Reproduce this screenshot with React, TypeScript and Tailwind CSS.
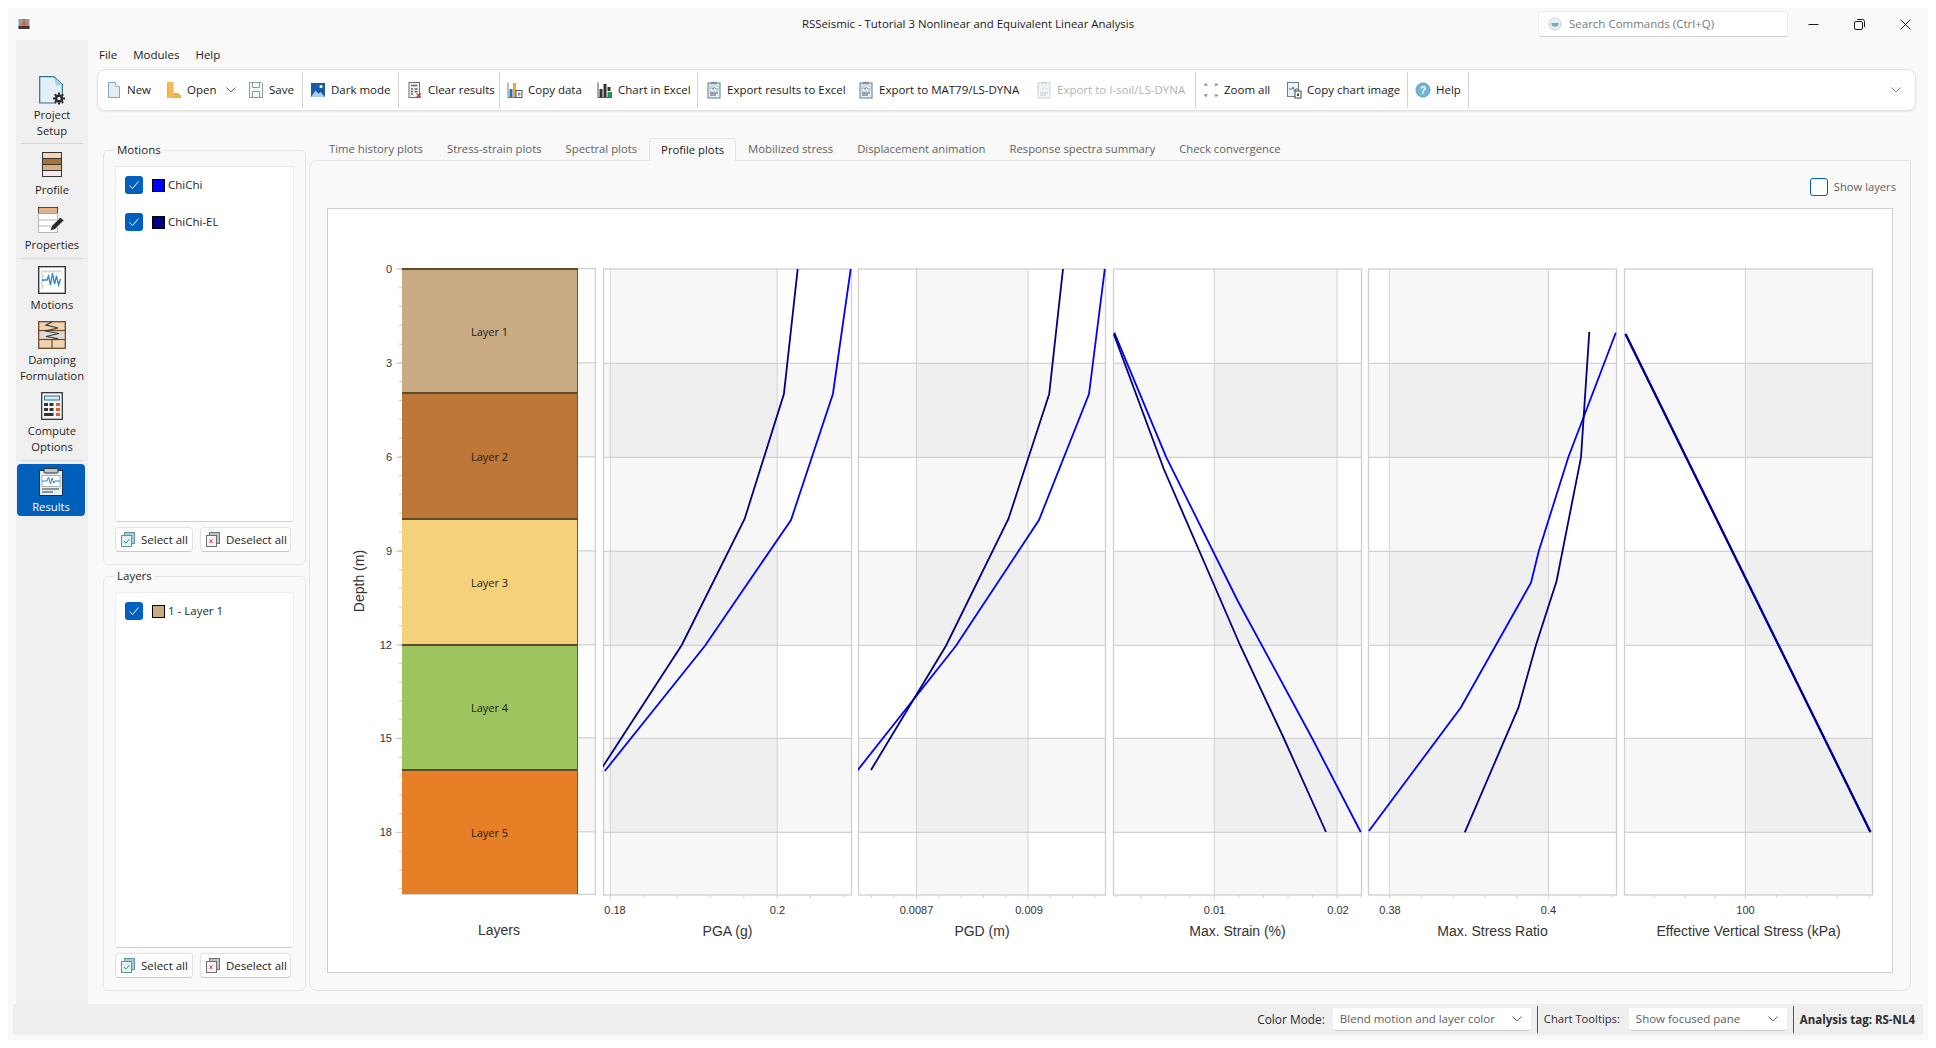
import { ReactNode } from 'react'

const uiFont = "font-['Open_Sans','Noto_Sans',sans-serif]"
const chartFont = "font-['Liberation_Sans',Arial,sans-serif]"

const TOP = 268
const BOTTOM = 894
const rowLines = [362.3, 456.3, 550.3, 644.3, 737.3, 831.3]
const rowEdges = [TOP, ...rowLines, BOTTOM]

function NewIcon() {
  return (
    <svg width="16" height="18" viewBox="0 0 16 18">
      <path d="M2.5 1.5h7l4 4v11h-11z" fill="#e3eff5" stroke="#7fa6b8" />
      <path d="M9.5 1.5v4h4" fill="#f6fbfd" stroke="#9fbecb" />
    </svg>
  )
}

function OpenIcon() {
  return (
    <svg width="16" height="18" viewBox="0 0 16 18">
      <path d="M1 1h6.5v11h4.5l3 2.5V17H1z" fill="#f6ad3c" />
      <path d="M3 1h1.5v16H3zM6 1h1.5v16H6z" fill="#f9c46f" />
    </svg>
  )
}

function SaveIcon() {
  return (
    <svg width="16" height="18" viewBox="0 0 16 18">
      <path d="M1.5 1.5h12l1 1v14h-13z" fill="#f5f8fa" stroke="#8d9ca3" />
      <path d="M4.5 1.5v5h7v-5M4.5 16.5v-6h7v6" fill="none" stroke="#8d9ca3" />
    </svg>
  )
}

function DarkIcon() {
  return (
    <svg width="16" height="18" viewBox="0 0 16 18">
      <rect x="1" y="2" width="14" height="14" fill="#175ca8" />
      <circle cx="11" cy="5.5" r="1.6" fill="#fff" />
      <path d="M1 16l4.5-6.5 3 3.2 2-1.7L15 16z" fill="#a9cdf0" />
    </svg>
  )
}

function ClearIcon() {
  return (
    <svg width="16" height="18" viewBox="0 0 16 18">
      <rect x="2" y="1.5" width="10.5" height="15" fill="#f4f4f4" stroke="#6d6d6d" />
      <path d="M4 4.5h6.5M4 8h2M7.5 8h3M4 10.5h2M7.5 10.5h3M4 13h2" stroke="#666" strokeWidth="1.3" />
      <path d="M9.5 12.5l4.5 4M14 12.5l-4.5 4" stroke="#c8332b" strokeWidth="1.1" />
    </svg>
  )
}

function CopyDataIcon() {
  return (
    <svg width="16" height="18" viewBox="0 0 16 18">
      <path d="M1 1.5v15h8" fill="none" stroke="#777" />
      <rect x="2.5" y="8" width="3" height="8" fill="#1f76c2" />
      <rect x="6" y="2" width="3" height="14" fill="#f2a73b" />
      <rect x="9" y="9.5" width="6" height="7" fill="#fff" stroke="#555" />
      <rect x="11" y="11.5" width="2.5" height="3" fill="#8d8d8d" />
    </svg>
  )
}

function ChartExcelIcon() {
  return (
    <svg width="16" height="18" viewBox="0 0 16 18">
      <path d="M1 1.5v15h14" fill="none" stroke="#555" />
      <rect x="2.5" y="8" width="3" height="8" fill="#333" />
      <rect x="6.5" y="3" width="3" height="13" fill="#333" />
      <rect x="10.5" y="6" width="3" height="4" fill="#333" />
      <rect x="10.5" y="11" width="4.5" height="5.5" fill="#1d9a4d" />
    </svg>
  )
}

function ExportIcon({ faded }: { faded?: boolean }) {
  return (
    <svg width="16" height="18" viewBox="0 0 16 18" opacity={faded ? 0.35 : 1}>
      <rect x="2" y="2" width="12" height="15" fill="#e3eff5" stroke="#5f7d8c" />
      <rect x="5" y="0.8" width="6" height="2.4" fill="#8d8d8d" />
      <rect x="4" y="5" width="8" height="5" fill="#fff" stroke="#9aa" strokeWidth="0.6" />
      <path d="M4.5 8l1.5-1.5 1 2 1.5-2.5 1 2H12" fill="none" stroke="#2b83c6" strokeWidth="0.8" />
      <path d="M4 12h8M4 14h6" stroke="#555" />
    </svg>
  )
}

function ZoomAllIcon() {
  return (
    <svg width="16" height="18" viewBox="0 0 16 18" fill="none" stroke="#777">
      <path d="M2 5V3h2M2.5 3l2 2M14 5V3h-2M13.5 3l-2 2M2 13v2h2M2.5 15l2-2M14 13v2h-2M13.5 15l-2-2" />
    </svg>
  )
}

function CopyChartIcon() {
  return (
    <svg width="16" height="18" viewBox="0 0 16 18">
      <rect x="1.5" y="1.5" width="11" height="14" fill="#eef3f6" stroke="#7a7a7a" />
      <path d="M3 8h3l1-2 1.5 4 1-2H12" fill="none" stroke="#2b83c6" />
      <rect x="9" y="10" width="6" height="7" fill="#fff" stroke="#444" />
      <rect x="11" y="12.5" width="2" height="2.5" fill="#444" />
    </svg>
  )
}

function HelpIcon() {
  return (
    <svg width="16" height="18" viewBox="0 0 16 18">
      <circle cx="8" cy="9" r="7" fill="#72b6d9" stroke="#5a9ec2" />
      <text x="8" y="12.5" textAnchor="middle" fontSize="10" fontFamily="Liberation Sans" fontWeight="700" fill="#fff">?</text>
    </svg>
  )
}

function ChevronDown({ stroke = '#666' }: { stroke?: string }) {
  return (
    <svg width="10" height="6" viewBox="0 0 10 6" fill="none" stroke={stroke}>
      <path d="M0.5 0.5L5 5l4.5-4.5" />
    </svg>
  )
}

function ProjectIcon() {
  return (
    <svg width="26" height="29" viewBox="0 0 26 29">
      <path d="M0.7 0.7h14l8.6 7.8v18.5H0.7z" fill="#e2eff6" stroke="#2a7290" strokeWidth="1.2" />
      <path d="M14.5 0.7l8.6 7.8-6 1.5z" fill="#a8d4e8" />
      <circle cx="20" cy="22.5" r="5.8" fill="#f0f0f0" />
      <circle cx="20" cy="22.5" r="3" fill="none" stroke="#2a2a2a" strokeWidth="2.6" />
      <path d="M20 16.5v2M20 26.5v2M14 22.5h2M24 22.5h2M15.8 18.3l1.4 1.4M22.8 25.3l1.4 1.4M15.8 26.7l1.4-1.4M22.8 19.7l1.4-1.4" stroke="#2a2a2a" strokeWidth="2" />
    </svg>
  )
}

function ProfileIcon() {
  return (
    <svg width="20" height="25" viewBox="0 0 20 25">
      <rect x="0.5" y="0.5" width="19" height="6" fill="#f3d6b4" stroke="#333" />
      <rect x="0.5" y="6.5" width="19" height="6" fill="#a6723f" stroke="#333" />
      <rect x="0.5" y="12.5" width="19" height="6" fill="#ddad7c" stroke="#333" />
      <rect x="0.5" y="18.5" width="19" height="6" fill="#ececec" stroke="#333" />
    </svg>
  )
}

function PropertiesIcon() {
  return (
    <svg width="28" height="28" viewBox="0 0 28 28">
      <rect x="0.5" y="0.5" width="19" height="6" fill="#dfb48b" stroke="#5a4632" />
      <path d="M0.5 6.5v19h19v-19M0.5 13h19M0.5 19h19" fill="#fff" stroke="#b5b5b5" />
      <path d="M12 24l1.5-5 9-9 3.5 3.5-9 9z" fill="#2a2a2a" stroke="#f4f4f4" />
    </svg>
  )
}

function MotionsIcon() {
  return (
    <svg width="28" height="28" viewBox="0 0 28 28">
      <rect x="0.7" y="0.7" width="26.6" height="26.6" fill="#fff" stroke="#2a2a2a" strokeWidth="1.3" />
      <path d="M4 5h20M4 5v18M8 5v2M12 5v2M16 5v2M20 5v2M4 10h2M4 15h2M4 20h2" stroke="#c5c5c5" fill="none" />
      <path d="M4 14h5l1.5-4 2 9 2-12 2 11 2-8 2 9 2-6" fill="none" stroke="#2b86cc" strokeWidth="1.3" />
    </svg>
  )
}

function DampingIcon() {
  return (
    <svg width="28" height="28" viewBox="0 0 28 28">
      <rect x="0.7" y="0.7" width="26.6" height="26.6" fill="#f0d3b0" stroke="#6d4a25" strokeWidth="1.3" />
      <rect x="0.7" y="9.5" width="26.6" height="9" fill="#dedad5" stroke="#6d4a25" strokeWidth="1.2" />
      <path d="M14 18.5v9" stroke="#6d4a25" strokeWidth="1.2" />
      <path d="M14 1l-6 3 12 3-13 3 14 2.5-13 3 12 2-6 1" fill="none" stroke="#3c3c3c" strokeWidth="1.2" />
    </svg>
  )
}

function ComputeIcon() {
  return (
    <svg width="22" height="28" viewBox="0 0 22 28">
      <rect x="0.7" y="0.7" width="20.6" height="26.6" fill="#f5f5f5" stroke="#2a2a2a" strokeWidth="1.2" />
      <rect x="3.5" y="4" width="15" height="4" fill="#dcecf3" stroke="#2a7290" />
      <path d="M3 11h4v3H3zM8.5 11h4v3h-4zM3 16h4v3H3zM8.5 16h4v3h-4zM3 21h9.5v3H3z" fill="#333" />
      <path d="M15 11h4v3h-4zM15 16h4v3h-4zM15 21h4v3h-4z" fill="#ee5a24" />
    </svg>
  )
}

function ResultsIcon() {
  return (
    <svg width="24" height="28" viewBox="0 0 24 28">
      <rect x="0.5" y="2.5" width="23" height="25" fill="#e3eff5" stroke="#17324a" />
      <rect x="5" y="0.5" width="14" height="4.5" rx="1" fill="#c4c4c4" stroke="#333" />
      <rect x="3" y="7.5" width="18" height="11" fill="#fff" stroke="#9fb2bd" />
      <path d="M3 13h5l1.5-4 2 7 1.5-6 2 5 1-2h5" fill="none" stroke="#2b86cc" />
      <path d="M3 21h17M3 24h11" stroke="#333" />
    </svg>
  )
}

function SelectAllIcon({ kind }: { kind: 'select' | 'deselect' }) {
  const front = kind === 'select' ? '#e3f0f4' : '#f6f6f6'
  const back = kind === 'select' ? '#a9cbd8' : '#c2c2c2'
  const edge = kind === 'select' ? '#5f93a8' : '#6f6f6f'
  return (
    <svg width="14" height="15" viewBox="0 0 14 15">
      <rect x="3.5" y="0.5" width="10" height="11" fill={back} stroke={edge} />
      <rect x="0.5" y="3.5" width="10" height="11" fill={front} stroke={edge} />
      {kind === 'select' ? (
        <path d="M3 9l2 2 3.5-4" fill="none" stroke="#2ba34f" />
      ) : (
        <path d="M3.5 7.5l3 3.5M6.5 7.5l-3 3.5" stroke="#e0312a" />
      )}
    </svg>
  )
}

function Check() {
  return (
    <span className="flex h-[18px] w-[18px] items-center justify-center rounded-[3px] bg-[#0060c0]">
      <svg width="12" height="10" viewBox="0 0 12 10" fill="none" stroke="#fff" strokeWidth="1">
        <path d="M1.5 5.5l3 3 6-7" />
      </svg>
    </span>
  )
}

const tools: { w: string; label: string; icon: ReactNode; chevron?: boolean; faded?: boolean; sep?: string }[] = [
  { w: 'w-[60px]', label: 'New', icon: <NewIcon /> },
  { w: 'w-[82px]', label: 'Open', icon: <OpenIcon />, chevron: true },
  { w: 'w-[54px]', label: 'Save', icon: <SaveIcon />, sep: 'mr-[7px]' },
  { w: 'w-[88px]', label: 'Dark mode', icon: <DarkIcon />, sep: 'mr-[8px]' },
  { w: 'w-[92px]', label: 'Clear results', icon: <ClearIcon />, sep: 'mr-[7px]' },
  { w: 'w-[90px]', label: 'Copy data', icon: <CopyDataIcon /> },
  { w: 'w-[100px]', label: 'Chart in Excel', icon: <ChartExcelIcon />, sep: 'mr-[8px]' },
  { w: 'w-[152px]', label: 'Export results to Excel', icon: <ExportIcon /> },
  { w: 'w-[178px]', label: 'Export to MAT79/LS-DYNA', icon: <ExportIcon /> },
  { w: 'w-[159px]', label: 'Export to I-soil/LS-DYNA', icon: <ExportIcon faded />, faded: true, sep: 'mr-[7px]' },
  { w: 'w-[83px]', label: 'Zoom all', icon: <ZoomAllIcon /> },
  { w: 'w-[121px]', label: 'Copy chart image', icon: <CopyChartIcon />, sep: 'mr-[7px]' },
  { w: 'w-[53px]', label: 'Help', icon: <HelpIcon />, sep: '' },
]

const tabs = [
  'Time history plots',
  'Stress-strain plots',
  'Spectral plots',
  'Profile plots',
  'Mobilized stress',
  'Displacement animation',
  'Response spectra summary',
  'Check convergence',
]

function Toolbar() {
  return (
    <div className="flex h-[42px] w-[1819px] items-center rounded-[8px] border border-[#e2e2e2] bg-white pl-[8px] pr-[14px] shadow-[0_1px_2px_rgba(0,0,0,0.08)]">
      {tools.map((t) => (
        <div key={t.label} className="flex h-full items-center">
          <div className={`flex items-center ${t.w}`}>
            <span className="flex w-[21px] shrink-0">{t.icon}</span>
            <span className={`whitespace-nowrap text-[11.5px] ${t.faded ? 'text-[#b4b4b4]' : 'text-[#1b1b1b]'}`}>{t.label}</span>
            {t.chevron && (
              <span className="ml-[9px]">
                <ChevronDown />
              </span>
            )}
          </div>
          {t.sep !== undefined && <div className={`h-[36px] w-px bg-[#d4d4d4] ${t.sep}`} />}
        </div>
      ))}
      <div className="ml-auto">
        <ChevronDown stroke="#8a8a8a" />
      </div>
    </div>
  )
}

function SideItem({ icon, lines, className, labelGap, active }: { icon: ReactNode; lines: string[]; className: string; labelGap: string; active?: boolean }) {
  return (
    <div className={`flex flex-col items-center ${className}`}>
      <div className="flex h-[28px] items-start justify-center">{icon}</div>
      <div className={`flex flex-col items-center text-[11.25px] leading-[16px] ${labelGap} ${active ? 'text-white' : 'text-[#1f1f1f]'}`}>
        {lines.map((l) => (
          <span key={l}>{l}</span>
        ))}
      </div>
    </div>
  )
}

function Sidebar() {
  const sep = 'h-px w-[62px] bg-[#d6d6d6]'
  return (
    <div className="flex w-[72px] flex-col items-center bg-[#f0f0f0]">
      <SideItem icon={<ProjectIcon />} lines={['Project', 'Setup']} className="mt-[36px]" labelGap="mt-[3px]" />
      <div className={`mt-[4px] ${sep}`} />
      <SideItem icon={<ProfileIcon />} lines={['Profile']} className="mt-[8px]" labelGap="mt-[2px]" />
      <SideItem icon={<PropertiesIcon />} lines={['Properties']} className="mt-[9px]" labelGap="mt-[2px]" />
      <div className={`mt-[5px] ${sep}`} />
      <SideItem icon={<MotionsIcon />} lines={['Motions']} className="mt-[7px]" labelGap="mt-[3px]" />
      <SideItem icon={<DampingIcon />} lines={['Damping', 'Formulation']} className="mt-[8px]" labelGap="mt-[3px]" />
      <SideItem icon={<ComputeIcon />} lines={['Compute', 'Options']} className="mt-[8px]" labelGap="mt-[3px]" />
      <div className={`mt-[5px] ${sep}`} />
      <div className="ml-[-2px] mt-[3px] flex h-[52px] w-[68px] justify-center rounded-[4px] bg-[#0060ba] pt-[4px]">
        <SideItem icon={<ResultsIcon />} lines={['Results']} className="" labelGap="mt-[3px]" active />
      </div>
    </div>
  )
}

function SelectButtons() {
  const btn = 'flex h-[25px] items-center rounded-[4px] border border-[#e3e3e3] border-b-[#c8c8c8] bg-white pl-[5px] text-[11.5px] text-[#1b1b1b]'
  return (
    <div className="flex gap-[7px]">
      <div className={`w-[78px] gap-[6px] ${btn}`}>
        <SelectAllIcon kind="select" />
        Select all
      </div>
      <div className={`w-[91px] gap-[6px] ${btn}`}>
        <SelectAllIcon kind="deselect" />
        Deselect all
      </div>
    </div>
  )
}

function ListRow({ color, label, className }: { color: string; label: string; className: string }) {
  return (
    <div className={`flex h-[18px] items-center text-[11.5px] text-[#1f1f1f] ${className}`}>
      <Check />
      <span className={`ml-[9px] h-[13px] w-[13px] border border-black ${color}`} />
      <span className="ml-[3px]">{label}</span>
    </div>
  )
}

function Group({ title, height, listHeight, children }: { title: string; height: string; listHeight: string; children: ReactNode }) {
  return (
    <fieldset className={`w-[203px] rounded-[6px] border border-[#e6e6e6] px-[11px] ${height}`}>
      <legend className="ml-[-1px] h-[16px] px-[3px] text-[11.5px] leading-[16px] text-[#1f1f1f]">{title}</legend>
      <div className={`mt-[8px] rounded-[4px] border border-[#ececec] border-b-[#cfcfcf] bg-white pl-[9px] pt-[9px] ${listHeight}`}>{children}</div>
      <div className="mt-[5px]">
        <SelectButtons />
      </div>
    </fieldset>
  )
}

function Bands({ x0, x1, splits }: { x0: number; x1: number; splits: number[] }) {
  // checker bands: every second row and every second column get a shade
  const cols = [x0, ...splits, x1]
  const out: ReactNode[] = []
  for (let r = 0; r < rowEdges.length - 1; r++) {
    for (let c = 0; c < cols.length - 1; c++) {
      const shade = (r % 2) + (c % 2)
      if (shade === 0) continue
      out.push(
        <rect
          key={`${r}-${c}`}
          x={cols[c]}
          y={rowEdges[r]}
          width={cols[c + 1] - cols[c]}
          height={rowEdges[r + 1] - rowEdges[r]}
          fill={shade === 1 ? '#f7f7f7' : '#efefef'}
        />,
      )
    }
  }
  return <>{out}</>
}

function Pane({
  x0,
  x1,
  width,
  title,
  splits,
  ticks,
  labels,
  curves,
}: {
  x0: number
  x1: number
  width: string
  title: string
  splits: number[]
  ticks: number[]
  labels: [number, string][]
  curves: { color: string; pts: string; w?: number }[]
}) {
  const w = x1 - x0
  return (
    <div className={`flex flex-col items-center ${width}`}>
      <svg width={w} height={652} viewBox={`${x0} 267 ${w} 652`} className="shrink-0 overflow-visible">
        <clipPath id={`clip-${x0}`}>
          <rect x={x0} y={TOP} width={w} height={BOTTOM - TOP} />
        </clipPath>
        <Bands x0={x0} x1={x1} splits={splits} />
        {splits.map((s) => (
          <path key={s} d={`M${s} ${TOP}V${BOTTOM + 4}`} stroke="#d2d2d2" />
        ))}
        {rowLines.map((y) => (
          <path key={y} d={`M${x0} ${y}H${x1}`} stroke="#d2d2d2" strokeWidth="1.3" />
        ))}
        <rect x={x0 + 0.5} y={TOP} width={w - 1} height={BOTTOM - TOP} fill="none" stroke="#d0d0d0" strokeWidth="1.3" />
        {ticks.map((t) => (
          <path key={t} d={`M${t} ${BOTTOM}v3`} stroke="#d2d2d2" />
        ))}
        <g clipPath={`url(#clip-${x0})`}>
          {curves.map((c) => (
            <polyline key={c.color} points={c.pts} fill="none" stroke={c.color} strokeWidth={c.w ?? 1.8} />
          ))}
        </g>
        {labels.map(([x, s]) => (
          <text key={s} x={x} y={913} textAnchor="middle" fontSize="11" fill="#333" fontFamily="Liberation Sans">
            {s}
          </text>
        ))}
      </svg>
      <div className={`mt-[2px] text-[14px] leading-[18px] text-[#333] ${chartFont}`}>{title}</div>
    </div>
  )
}

function range(a: number, step: number, b: number) {
  const out: number[] = []
  for (let v = a; v <= b; v += step) out.push(v)
  return out
}

function DepthAxis() {
  const minor = range(0, 0.6, 20)
  return (
    <svg width={74} height={652} viewBox="328 267 74 652" className="shrink-0 overflow-visible">
      {minor.map((d) => (
        <path key={d} d={`M399 ${TOP + d * 31.3}h3`} stroke="#c8c8c8" />
      ))}
      {[0, 1, 2, 3, 4, 5, 6].map((i) => {
        const y = i === 0 ? TOP : rowLines[i - 1]
        return (
          <g key={i}>
            <path d={`M396 ${y}h6`} stroke="#c8c8c8" />
            <text x={392} y={y + 4} textAnchor="end" fontSize="11" fill="#333" fontFamily="Liberation Sans">
              {i * 3}
            </text>
          </g>
        )
      })}
      <text x={364} y={580} transform="rotate(-90 364 580)" textAnchor="middle" fontSize="14" fill="#333" fontFamily="Liberation Sans">
        Depth (m)
      </text>
    </svg>
  )
}

const layers = [
  { name: 'Layer 1', color: 'bg-[#c8ab82]', h: 'h-[124px]' },
  { name: 'Layer 2', color: 'bg-[#bd7738]', h: 'h-[126px]' },
  { name: 'Layer 3', color: 'bg-[#f6d17c]', h: 'h-[126px]' },
  { name: 'Layer 4', color: 'bg-[#9dc45f]', h: 'h-[125px]' },
  { name: 'Layer 5', color: 'bg-[#e77f27]', h: 'h-[125px]' },
]

function LayersPane() {
  return (
    <div className="flex w-[194px] flex-col items-center">
      <div className="flex w-full shrink-0">
        <div className="flex w-[176px] flex-col border-b border-[#d0d0d0]">
          {layers.map((l) => (
            <div key={l.name} className={`flex items-center justify-center border-r border-t-2 border-r-[#6b5a3a] border-t-[#5f4b2c] pt-[2px] text-[11px] text-[#1b1b1b] ${l.color} ${l.h}`}>
              {l.name}
            </div>
          ))}
        </div>
        <svg width={18} height={627} viewBox="578 267.5 18 627" className="shrink-0">
          <Bands x0={578} x1={596} splits={[]} />
          {rowLines.map((y) => (
            <path key={y} d={`M578 ${y}H596`} stroke="#d2d2d2" strokeWidth="1.3" />
          ))}
          <path d="M578 268H595.4V894H578" fill="none" stroke="#d0d0d0" strokeWidth="1.3" />
        </svg>
      </div>
      <div className={`mt-[26px] text-[14px] leading-[18px] text-[#333] ${chartFont}`}>Layers</div>
    </div>
  )
}

function Chart() {
  return (
    <div className="flex h-[765px] w-[1566px] items-start border border-[#d0d0d0] bg-white pt-[59px]">
      <DepthAxis />
      <LayersPane />
      <div className="w-[7px] shrink-0" />
      <Pane
        x0={603}
        x1={852}
        width="w-[249px]"
        title="PGA (g)"
        splits={[610.4, 777.2]}
        ticks={[643.8, 677.2, 710.5, 743.9, 810.6, 844]}
        labels={[[615, '0.18'], [777.5, '0.2']]}
        curves={[
          { color: '#0000ff', pts: '850.7,268 832.9,393 791,519 705,644.7 604.8,770' },
          { color: '#000080', pts: '797.7,268 783.9,393 744.6,518 681.8,644 600,770' },
        ]}
      />
      <div className="w-[6px] shrink-0" />
      <Pane
        x0={858}
        x1={1106}
        width="w-[248px]"
        title="PGD (m)"
        splits={[916.5, 1028]}
        ticks={[871.4, 893.7, 938.8, 961.1, 983.4, 1005.7, 1050.3, 1072.6, 1094.9]}
        labels={[[916.5, '0.0087'], [1029, '0.009']]}
        curves={[
          { color: '#0000ff', pts: '1104.8,268 1089,393 1039,519 956,644.7 857,770' },
          { color: '#000080', pts: '1063,268 1049.2,393 1008.4,518 946,644.7 871,769' },
        ]}
      />
      <div className="w-[7px] shrink-0" />
      <Pane
        x0={1113}
        x1={1362}
        width="w-[249px]"
        title="Max. Strain (%)"
        splits={[1214.3, 1337]}
        ticks={[1116, 1140.6, 1165.1, 1189.7, 1238.9, 1263.4, 1288, 1312.4, 1361]}
        labels={[[1214.5, '0.01'], [1338, '0.02']]}
        curves={[
          { color: '#0000ff', pts: '1114.3,331.7 1166.3,456.3 1237.8,600 1312,737 1360.7,831' },
          { color: '#000080', pts: '1113.8,333 1163.8,468 1221,600 1240,644 1283.7,737 1326,831' },
        ]}
      />
      <div className="w-[6px] shrink-0" />
      <Pane
        x0={1368}
        x1={1617}
        width="w-[249px]"
        title="Max. Stress Ratio"
        splits={[1389.3, 1548.5]}
        ticks={[1421.1, 1453, 1484.8, 1516.7, 1580.3, 1612.2]}
        labels={[[1390, '0.38'], [1548.5, '0.4']]}
        curves={[
          { color: '#0000ff', pts: '1615.8,331.7 1568.4,456 1538.8,550 1531,581.7 1460.7,706.7 1368.9,830' },
          { color: '#000080', pts: '1589.3,331 1581,456.3 1556.6,580 1536,644 1518.4,706.7 1464.8,831.3' },
        ]}
      />
      <div className="w-[7px] shrink-0" />
      <Pane
        x0={1624}
        x1={1873}
        width="w-[249px]"
        title="Effective Vertical Stress (kPa)"
        splits={[1745.4]}
        ticks={[1654.5, 1684.9, 1715.3, 1776.4, 1806.8, 1837.2, 1869]}
        labels={[[1745.5, '100']]}
        curves={[
          { color: '#0000ff', pts: '1625.5,333 1870.4,831', w: 2.2 },
          { color: '#000080', pts: '1625.5,333 1870.4,831', w: 1.9 },
        ]}
      />
    </div>
  )
}

function Combo({ width, label }: { width: string; label: string }) {
  return (
    <div className={`flex h-[23px] items-center justify-between rounded-[3px] border-b border-b-[#c9c9c9] bg-white pl-[7px] pr-[9px] text-[11.5px] text-[#5d5d5d] ${width}`}>
      {label}
      <ChevronDown />
    </div>
  )
}

export default function App() {
  return (
    <div className={`h-[1048px] w-[1936px] overflow-hidden bg-white pl-[8px] pt-[8px] ${uiFont}`}>
      <div className="flex h-[1032px] w-[1920px] flex-col bg-[#f9f9f9]">
        {/* title bar */}
        <div className="flex h-[32px] shrink-0 items-center">
          <div className="w-[390px] shrink-0 pl-[8px]">
            <svg width="16" height="16" viewBox="0 0 16 16">
              <rect width="16" height="16" fill="#fff" />
              <rect x="2.5" y="3" width="11" height="10" fill="#9a9a9a" />
              <rect x="2.5" y="10" width="11" height="3" fill="#3a3a3a" />
              <path d="M8 3v7M5 8h6" stroke="#e2562a" strokeWidth="1.5" />
            </svg>
          </div>
          <div className="flex-1 text-center text-[11.4px] text-[#1b1b1b]">RSSeismic - Tutorial 3 Nonlinear and Equivalent Linear Analysis</div>
          <div className="flex w-[390px] shrink-0 items-center">
            <div className="flex h-[26px] w-[250px] items-center gap-[7px] rounded-[3px] border border-[#ececec] border-b-[#cfcfcf] bg-white pl-[9px] text-[11.5px] text-[#7a7a7a]">
              <svg width="14" height="14" viewBox="0 0 15 15">
                <circle cx="7.5" cy="7.5" r="6.5" fill="#e6f0f4" stroke="#b9d2dc" />
                <path d="M3.5 6.5h8a4 4 0 0 1-8 0z" fill="#7fa9bb" />
              </svg>
              Search Commands (Ctrl+Q)
            </div>
            <div className="ml-[20px] flex w-[103px] items-center justify-between text-[#1b1b1b]">
              <svg width="11" height="11" viewBox="0 0 11 11" stroke="currentColor" fill="none">
                <path d="M0.5 5.5h10" />
              </svg>
              <svg width="11" height="11" viewBox="0 0 11 11" stroke="currentColor" fill="none">
                <rect x="0.5" y="2.5" width="8" height="8" rx="1.5" />
                <path d="M3 0.5h5.5a2 2 0 0 1 2 2V8" />
              </svg>
              <svg width="11" height="11" viewBox="0 0 11 11" stroke="currentColor" fill="none">
                <path d="M0.5 0.5l10 10M10.5 0.5l-10 10" />
              </svg>
            </div>
          </div>
        </div>

        {/* body */}
        <div className="flex h-[964px] shrink-0 pl-[8px]">
          <Sidebar />
          <div className="flex flex-col pl-[9px]">
            <div className="flex h-[29px] items-center gap-[16px] pl-[2px] text-[11.5px] text-[#1b1b1b]">
              <span>File</span>
              <span>Modules</span>
              <span>Help</span>
            </div>
            <Toolbar />
            <div className="mt-[27px] flex">
              <div className="ml-[6px] mt-[4px] flex flex-col gap-[3px]">
                <Group title="Motions" height="h-[423px]" listHeight="h-[356px]">
                  <ListRow color="bg-[#0000ff]" label="ChiChi" className="" />
                  <ListRow color="bg-[#000080]" label="ChiChi-EL" className="mt-[19px]" />
                </Group>
                <Group title="Layers" height="h-[423px]" listHeight="h-[356px]">
                  <ListRow color="bg-[#c8ab82]" label="1 - Layer 1" className="" />
                </Group>
              </div>
              <div className="ml-[3px] flex flex-col">
                <div className="flex h-[22px] pl-[8px] text-[11.3px]">
                  {tabs.map((t) =>
                    t === 'Profile plots' ? (
                      <div key={t} className="z-10 -mb-px flex items-center rounded-t-[4px] border border-b-0 border-[#e4e4e4] bg-[#f9f9f9] px-[11px] text-[#1b1b1b]">
                        {t}
                      </div>
                    ) : (
                      <div key={t} className="flex items-center px-[12px] text-[#5f5f5f]">
                        {t}
                      </div>
                    ),
                  )}
                </div>
                <div className="h-[831px] w-[1602px] rounded-b-[8px] rounded-tl-[8px] border border-[#e4e4e4] px-[17px]">
                  <div className="-mr-[3px] flex h-[47px] items-center justify-end gap-[6px] pt-[5px] text-[11.2px] text-[#5f5f5f]">
                    <span className="h-[18px] w-[18px] rounded-[3px] border-[1.5px] border-[#0060c0] bg-white" />
                    Show layers
                  </div>
                  <Chart />
                </div>
              </div>
            </div>
          </div>
        </div>

        {/* status bar */}
        <div className="mx-[5px] flex h-[31px] shrink-0 items-center justify-end bg-[#efefef] pr-[8px] text-[11.5px] text-[#2b2b2b]">
          <span className="text-[11.9px]">Color Mode:</span>
          <span className="ml-[8px]">
            <Combo width="w-[198px]" label="Blend motion and layer color" />
          </span>
          <span className="ml-[6px] h-[27px] w-px bg-[#555]" />
          <span className="ml-[6px] text-[11.2px]">Chart Tooltips:</span>
          <span className="ml-[9px]">
            <Combo width="w-[158px]" label="Show focused pane" />
          </span>
          <span className="ml-[6px] h-[27px] w-px bg-[#555]" />
          <span className="ml-[6px] font-bold">Analysis tag: RS-NL4</span>
        </div>
      </div>
    </div>
  )
}
